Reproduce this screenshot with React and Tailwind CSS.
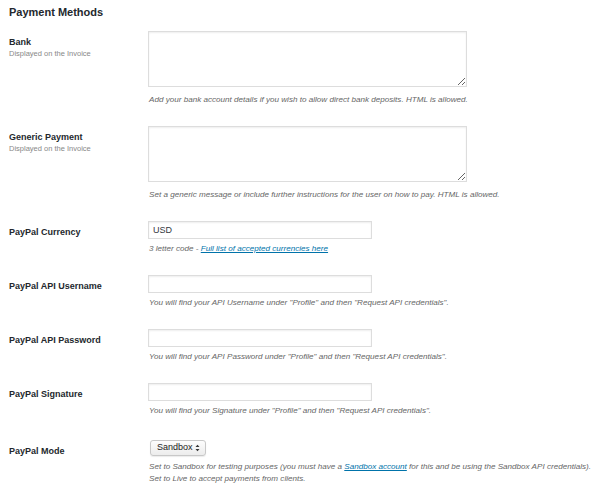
import React from "react";

const FONT = { fontFamily: '"Liberation Sans", Arial, sans-serif' };

function Label({ title, sub }) {
  return (
    <div className="w-[148px] shrink-0 pl-[9px] pt-[5px]">
      <div className="text-[9px] leading-[12px] font-bold text-[#23282d]">{title}</div>
      {sub && <div className="text-[7.5px] leading-[11px] text-[#888]">{sub}</div>}
    </div>
  );
}

function Help({ children, className = "" }) {
  return <p className={"text-[8.1px] leading-[12px] italic text-[#666] " + className}>{children}</p>;
}

function TextRow({ title, sub, help }) {
  return (
    <div className="flex">
      <Label title={title} sub={sub} />
      <div>
        <textarea className="block w-[319px] h-[56px] border border-[#ddd] shadow-[inset_0_1px_2px_rgba(0,0,0,0.07)] resize-y outline-none" />
        <Help className="mt-[7px] ml-[1px]">{help}</Help>
      </div>
    </div>
  );
}

function InputRow({ title, value = "", help }) {
  return (
    <div className="flex">
      <Label title={title} />
      <div>
        <input
          type="text"
          defaultValue={value}
          className="block w-[224px] h-[18px] border border-[#ddd] shadow-[inset_0_1px_2px_rgba(0,0,0,0.07)] px-[4px] text-[9px] text-[#32373c] outline-none"
        />
        <Help className="mt-[4px] ml-[1px]">{help}</Help>
      </div>
    </div>
  );
}

export default function App() {
  const apiHelp = (what) => `You will find your ${what} under "Profile" and then "Request API credentials".`;
  return (
    <div className="w-[600px] h-[487px] bg-white overflow-hidden" style={FONT}>
      <h2 className="pl-[9px] pt-[4px] text-[11px] leading-[16px] font-bold text-[#23282d]">Payment Methods</h2>
      <div className="mt-[11px] flex flex-col gap-[20px]">
        <TextRow
          title="Bank"
          sub="Displayed on the Invoice"
          help="Add your bank account details if you wish to allow direct bank deposits. HTML is allowed."
        />
        <TextRow
          title="Generic Payment"
          sub="Displayed on the Invoice"
          help="Set a generic message or include further instructions for the user on how to pay. HTML is allowed."
        />
        <InputRow
          title="PayPal Currency"
          value="USD"
          help={
            <>
              3 letter code - <a href="#" className="text-[#0073aa] underline">Full list of accepted currencies here</a>
            </>
          }
        />
        <InputRow title="PayPal API Username" help={apiHelp("API Username")} />
        <InputRow title="PayPal API Password" help={apiHelp("API Password")} />
        <InputRow title="PayPal Signature" help={apiHelp("Signature")} />
        <div className="flex mt-[3px]">
          <Label title="PayPal Mode" />
          <div>
            <div className="ml-[2px] w-[56px] h-[16px] rounded-[3px] border border-[#c8c8c8] bg-gradient-to-b from-[#fdfdfd] to-[#ececec] shadow-[0_1px_1px_rgba(0,0,0,0.08)] flex items-center justify-between pl-[6px] pr-[5px]">
              <span className="text-[9px] text-[#222]">Sandbox</span>
              <svg width="5" height="8" viewBox="0 0 5 8">
                <path d="M0.5 3 L2.5 0.8 L4.5 3 Z" fill="#333" />
                <path d="M0.5 5 L2.5 7.2 L4.5 5 Z" fill="#333" />
              </svg>
            </div>
            <Help className="mt-[5px] ml-[1px]">
              Set to Sandbox for testing purposes (you must have a{" "}
              <a href="#" className="text-[#0073aa] underline">Sandbox account</a> for this and be using the Sandbox API credentials).
              <br />
              Set to Live to accept payments from clients.
            </Help>
          </div>
        </div>
      </div>
    </div>
  );
}
